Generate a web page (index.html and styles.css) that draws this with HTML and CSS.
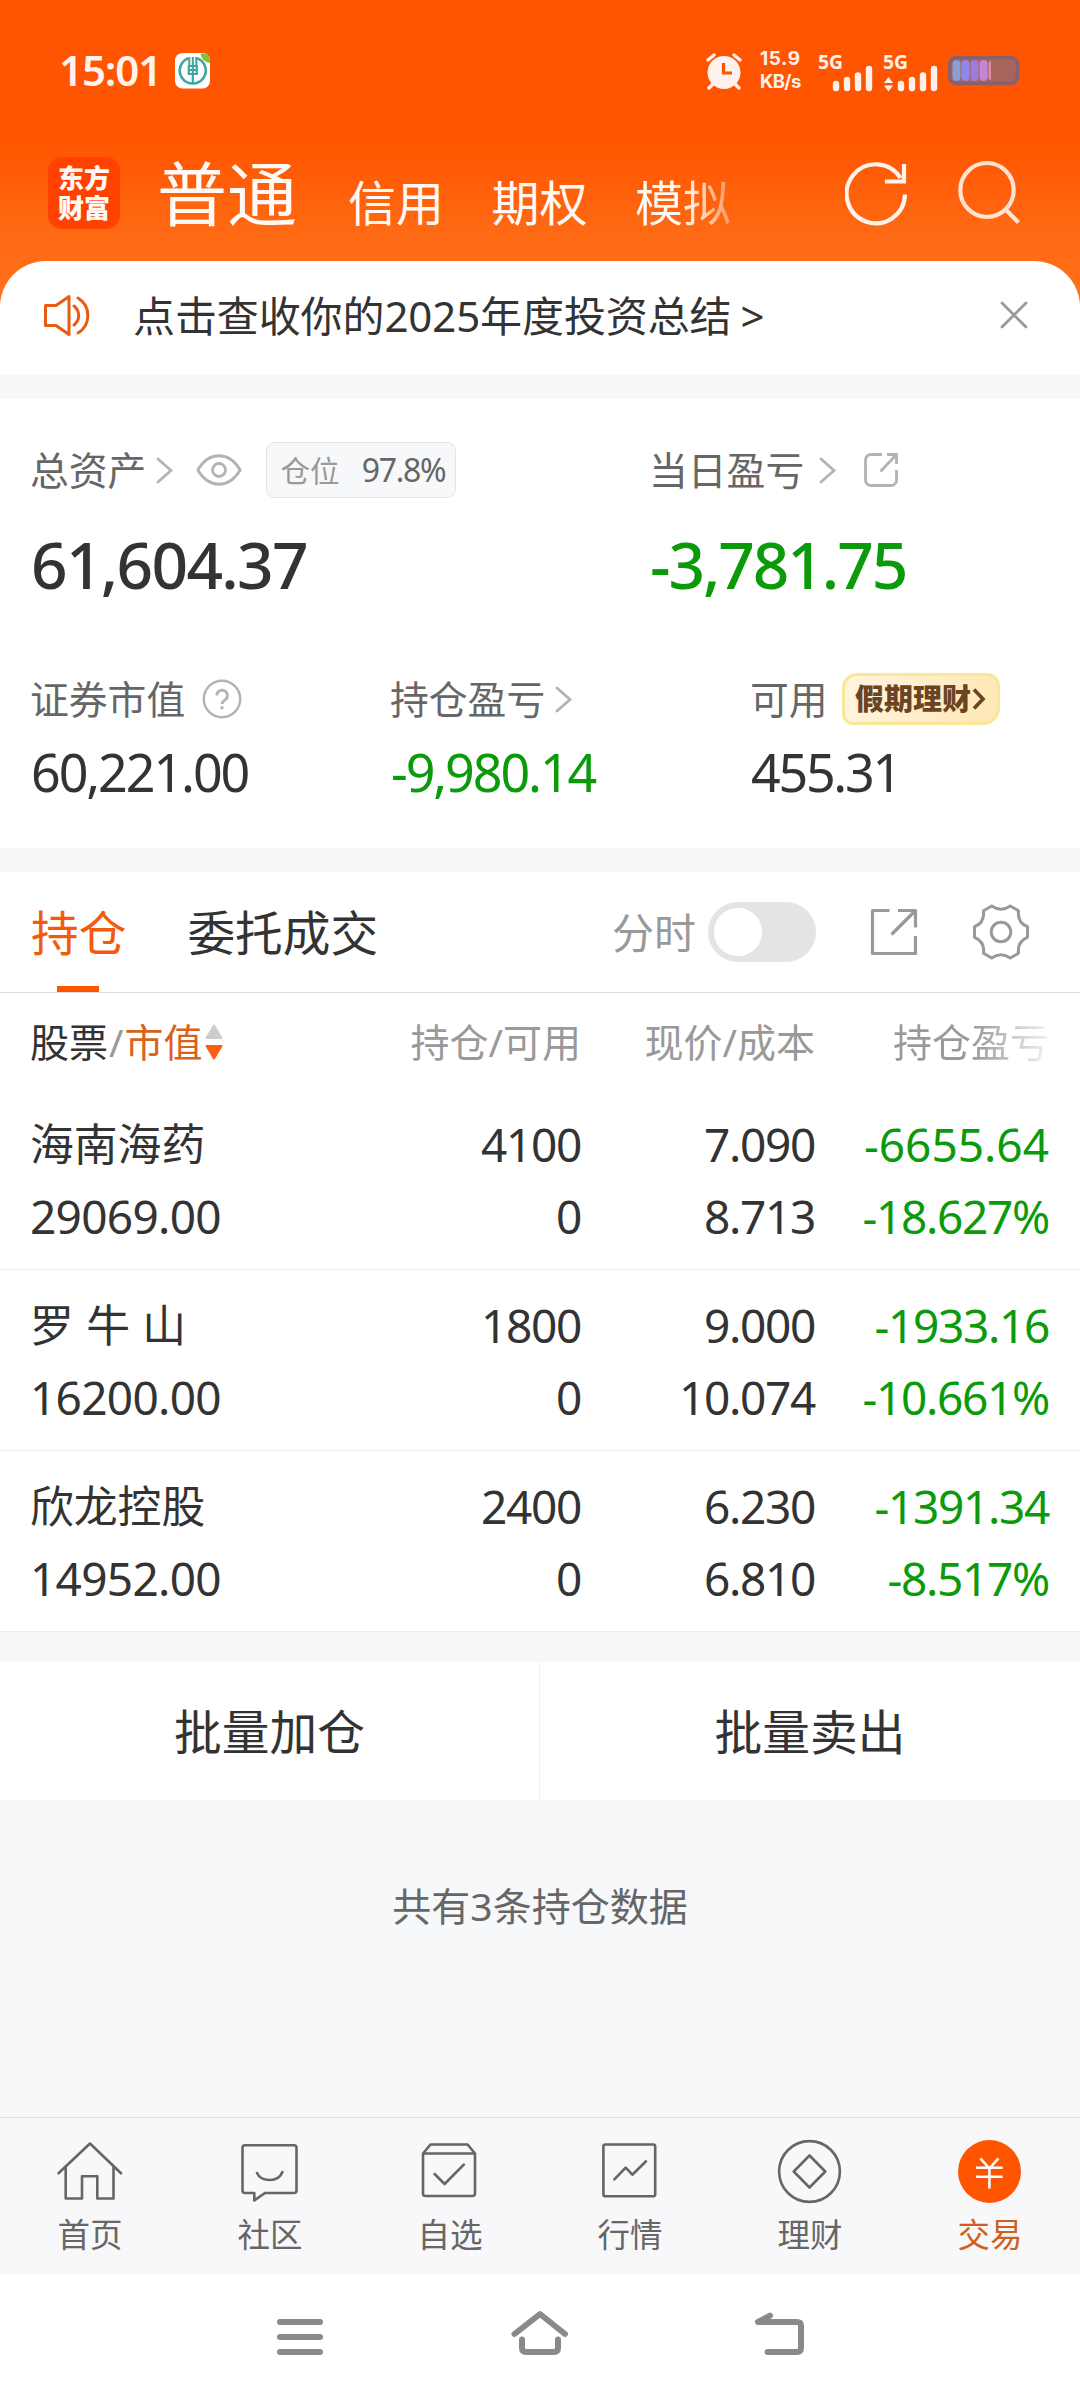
FILE: index.html
```html
<!DOCTYPE html>
<html lang="zh-CN">
<head>
<meta charset="utf-8">
<title>交易</title>
<link rel="stylesheet" href="styles.css">
</head>
<body>
<div class="screen">
  <header class="top">
    <div class="status">
      <span class="clock">15:01</span>
      <svg class="bank" width="36" height="36" viewBox="0 0 36 36">
        <rect width="35" height="35.5" rx="7.5" fill="#fff"/>
        <path d="M25.500 0.500H28a7 7 0 0 1 7 7v2.500a10 10 0 0 1-9.500-9.500z" fill="#7cc52c"/>
        <g fill="none" stroke="#3fa79f">
          <path d="M13.500 5.200A13 13 0 1 0 22 5.200" stroke-width="2.600"/>
          <path d="M14.300 4v9M17.800 4v9M21.300 4v9" stroke-width="2"/>
          <path d="M13.800 13h8v8h-8zM13 17h9.500M17.800 12v19" stroke-width="2.200"/>
        </g>
      </svg>
      <div class="status-right">
        <svg class="alarm" width="38" height="38" viewBox="0 0 38 38">
          <circle cx="19" cy="20.500" r="16.500" fill="#fff1eb"/>
          <path d="M3 8l6-5M35 8l-6-5M8 32l-4 4M30 32l4 4" stroke="#fff1eb" stroke-width="3.400" stroke-linecap="round"/>
          <path d="M18.500 11v10H27" fill="none" stroke="#ff5500" stroke-width="3.200"/>
        </svg>
        <div class="speed"><span class="rate">15.9</span><span>KB/s</span></div>
        <svg class="sig" width="56" height="40" viewBox="0 0 56 40">
          <text x="0" y="18" class="g5" textLength="25" lengthAdjust="spacingAndGlyphs">5G</text>
          <path d="M18 33v4M29 29v8M40 24.500v12.500M51 18v19" stroke="#fff1eb" stroke-width="6.400" stroke-linecap="round"/>
        </svg>
        <svg class="sig" width="56" height="40" viewBox="0 0 56 40">
          <text x="0" y="18" class="g5" textLength="25" lengthAdjust="spacingAndGlyphs">5G</text>
          <path d="M1 32l4.500-6 4.500 6zM1 34.500l4.500 6 4.500-6z" fill="#fff1eb"/>
          <path d="M18 33v4M29 29v8M40 24.500v12.500M51 18v19" stroke="#fff1eb" stroke-width="6.400" stroke-linecap="round"/>
        </svg>
        <svg class="battery" width="72" height="30" viewBox="0 0 72 30">
          <rect x="1.500" y="1.500" width="68" height="26" rx="7" fill="#a5655c" stroke="#89616c" stroke-width="3.500"/>
          <rect x="4.500" y="4" width="8" height="21" rx="4" fill="#8c9dd3"/>
          <rect x="13.500" y="4" width="8" height="21" rx="4" fill="#8f87ea"/>
          <rect x="22.500" y="4" width="8" height="21" rx="4" fill="#a07bdb"/>
          <rect x="31.500" y="4" width="8" height="21" rx="4" fill="#c485d2"/>
          <path d="M43 4.500a4 4 0 0 0-2.500 4v12a4 4 0 0 0 2.500 4z" fill="#d98bb0"/>
        </svg>
      </div>
    </div>
    <div class="titlebar">
      <div class="logo">东方<br>财富</div>
      <nav class="modes">
        <span class="mode-on">普通</span><span>信用</span><span>期权</span><span class="mode-fade">模拟</span>
      </nav>
      <svg class="refresh" width="66" height="66" viewBox="0 0 66 66" fill="none" stroke="#fff3ea" stroke-width="4.200">
        <path d="M60 34.500A29.200 29.500 0 1 1 55.500 18"/>
        <path d="M59 4v17.500H40"/>
      </svg>
      <svg class="search" width="66" height="66" viewBox="0 0 66 66" fill="none" stroke="#ffe3d2" stroke-width="4.200">
        <ellipse cx="31" cy="31" rx="26.700" ry="27"/>
        <path d="M49.500 50.500l13 13"/>
      </svg>
    </div>
  </header>

  <main>
    <section class="notice">
      <svg width="50" height="46" viewBox="0 0 50 46" fill="none" stroke="#ea5b12" stroke-width="3" stroke-linecap="round" stroke-linejoin="round">
        <path d="M3.500 12.500H14L27 3.500v38L14 32.500H3.500z"/>
        <path d="M32 13a12 12 0 0 1 0 19M36 5a20.500 20.500 0 0 1 0 35"/>
      </svg>
      <span class="notice-text">点击查收你的2025年度投资总结<i>&gt;</i></span>
      <svg class="close" width="30" height="30" viewBox="0 0 30 30" stroke="#999" stroke-width="2.800" stroke-linecap="round"><path d="M3 2l24 24M27 2L3 26"/></svg>
    </section>

    <section class="assets">
      <div class="asset-main">
        <div>
          <div class="label"><span class="label-text">总资产</span>
            <svg class="chev" width="18" height="28" viewBox="0 0 18 28"><path d="M2 3l13 11.500L2 26"/></svg>
            <svg class="eye" width="46" height="32" viewBox="0 0 46 32" fill="none" stroke="#b3b3b3" stroke-width="2.800"><path d="M1.800 16C13-3 33-3 44.200 16C33 35 13 35 1.800 16z" stroke-linejoin="round"/><circle cx="23" cy="16" r="6.500"/></svg>
            <span class="pill"><em>仓位</em><b>97.8%</b></span>
          </div>
          <div class="big">61,604.37</div>
        </div>
        <div>
          <div class="label"><span class="label-text">当日盈亏</span>
            <svg class="chev chev-wide" width="18" height="28" viewBox="0 0 18 28"><path d="M2 3l13 11.500L2 26"/></svg>
            <svg class="share" width="36" height="36" viewBox="0 0 36 36" fill="none" stroke="#b3b3b3" stroke-width="2.800"><path d="M19 2.500H8a5.500 5.500 0 0 0-5.500 5.500v20A5.500 5.500 0 0 0 8 33.500h20a5.500 5.500 0 0 0 5.500-5.500V18M24 2.500h9.500V12M33 3L17.500 19.500"/></svg>
          </div>
          <div class="big big-loss green">-3,781.75</div>
        </div>
      </div>
      <div class="asset-sub">
        <div>
          <div class="label"><span class="label-text">证券市值</span>
            <svg class="help" width="40" height="40" viewBox="0 0 40 40" fill="none" stroke="#b3b3b3"><circle cx="20" cy="20" r="18.200" stroke-width="2.400"/><path d="M14.800 16.500a5.300 5.300 0 1 1 8.300 4.300c-2 1.300-3 2-3 4.200" stroke-width="2.800"/><circle cx="20" cy="28.800" r="1" stroke-width="1.600"/></svg>
          </div>
          <div class="mid">60,221.00</div>
        </div>
        <div>
          <div class="label"><span class="label-text">持仓盈亏</span>
            <svg class="chev chev-near" width="18" height="28" viewBox="0 0 18 28"><path d="M2 3l13 11.500L2 26"/></svg>
          </div>
          <div class="mid green">-9,980.14</div>
        </div>
        <div>
          <div class="label"><span class="label-text">可用</span>
            <span class="gold">假期理财<svg width="14" height="24" viewBox="0 0 14 24" fill="none" stroke="#6b4423" stroke-width="3.600"><path d="M2 2.500l9 9.500-9 9.500"/></svg></span>
          </div>
          <div class="mid tight">455.31</div>
        </div>
      </div>
    </section>

    <section class="holdings">
      <div class="tabs">
        <span class="tab tab-on">持仓</span>
        <span class="tab">委托成交</span>
        <span class="switch-label">分时</span>
        <span class="switch"></span>
        <svg class="export" width="48" height="48" viewBox="0 0 48 48" fill="none" stroke="#999" stroke-width="3.200" stroke-linejoin="round"><path d="M19.500 2.500H2.500v43h43V28M28 2.500h17.500V19.500M45 3L21.500 26.500"/></svg>
        <svg class="gear" width="56" height="56" viewBox="0 0 56 56" fill="none" stroke="#999" stroke-width="3" stroke-linejoin="round">
          <path d="M18.700 2C24.500 6 31.500 6 37.300 2L45.500 6.700C44.700 14 47.500 20 54.500 22.700V33.300C47.500 36 44.700 42 45.500 49.300L37.300 54C31.500 50 24.500 50 18.700 54L10.500 49.300C11.300 42 8.500 36 1.500 33.300V22.700C8.500 20 11.300 14 10.500 6.700z"/>
          <circle cx="28" cy="28" r="9.800"/>
        </svg>
      </div>
      <div class="row head">
        <span class="stock-head">股票<i>/</i><em>市值</em><svg width="18" height="38" viewBox="0 0 18 38"><path d="M9 2.500l7.500 12.500h-15z" fill="#ccc" stroke="#ccc" stroke-width="2" stroke-linejoin="round"/><path d="M9 35.500l7.500-12.500h-15z" fill="#fa5f12" stroke="#fa5f12" stroke-width="2" stroke-linejoin="round"/></svg></span>
        <span>持仓/可用</span><span>现价/成本</span><span class="col-fade">持仓盈亏</span>
      </div>
      <div class="row stock">
        <div><span class="name">海南海药</span><span class="value">29069.00</span></div>
        <div><span>4100</span><span>0</span></div>
        <div><span>7.090</span><span>8.713</span></div>
        <div class="green"><span class="loss">-6655.64</span><span>-18.627%</span></div>
      </div>
      <div class="row stock">
        <div><span class="name name-spaced">罗 牛 山</span><span class="value">16200.00</span></div>
        <div><span>1800</span><span>0</span></div>
        <div><span>9.000</span><span>10.074</span></div>
        <div class="green"><span>-1933.16</span><span>-10.661%</span></div>
      </div>
      <div class="row stock">
        <div><span class="name">欣龙控股</span><span class="value">14952.00</span></div>
        <div><span>2400</span><span>0</span></div>
        <div><span>6.230</span><span>6.810</span></div>
        <div class="green"><span>-1391.34</span><span>-8.517%</span></div>
      </div>
    </section>

    <section class="batch"><span>批量加仓</span><span>批量卖出</span></section>
    <p class="count">共有3条持仓数据</p>
  </main>

  <nav class="tabbar">
    <a><svg viewBox="0 0 72 72"><path d="M4.500 38.300L36 8.500l31 29.800M11.700 32v31.500H28V41.300h15.300v22.200h16.200V32"/></svg>首页</a>
    <a><svg viewBox="0 0 72 72"><path d="M11 10.200h49a2.500 2.500 0 0 1 2.500 2.500v42.800a2.500 2.500 0 0 1-2.500 2.500H31l-10.700 7.500V58H11a2.500 2.500 0 0 1-2.500-2.500V12.700a2.500 2.500 0 0 1 2.500-2.500zM23 38c4 9.500 21.500 9.500 25.400-1"/></svg>社区</a>
    <a><svg viewBox="0 0 72 72"><path d="M9 18.500h52v40a2.500 2.500 0 0 1-2.500 2.500h-47A2.500 2.500 0 0 1 9 58.500zM9 18.500l7.500-9h37.100l7.400 9M20.600 39l10 10 19.200-19.300"/></svg>自选</a>
    <a><svg viewBox="0 0 72 72"><rect x="9.400" y="9.500" width="51.800" height="51.800" rx="2"/><path d="M20.400 44.300l11.300-11.600 6.600 7L52 26.300"/></svg>行情</a>
    <a><svg viewBox="0 0 72 72"><circle cx="35.500" cy="36.500" r="30.400"/><path d="M35.500 20.500l15.800 16-15.800 16-15.800-16z"/></svg>理财</a>
    <a class="nav-on"><svg viewBox="0 0 72 72"><circle cx="35.500" cy="36.500" r="31.500" fill="#ff5500" stroke="none"/><path d="M26.400 23.300l9 10.200 9-10.200M35.400 33.500v20M22 32.700h26.500M22 41.700h26.500" stroke="#fff" stroke-linecap="butt"/></svg>交易</a>
  </nav>

  <footer class="sysnav">
    <svg viewBox="0 0 60 60"><path d="M10 15h40M10 30h40M10 45h40"/></svg>
    <svg viewBox="0 0 60 60"><path d="M4.500 27L30 7l25 20M12 32.500V41q0 4 4 4h28q4 0 4-4v-8.500"/></svg>
    <svg viewBox="0 0 60 60"><path d="M20 8.700L8 15h39q4 0 4 4v22q0 4-4 4H17.600"/></svg>
  </footer>
</div>
</body>
</html>
```

FILE: styles.css
```css
* { box-sizing: border-box; }
body {
  margin: 0;
  background: #fff;
  color: #333;
  font-family: "Noto Sans", "Noto Sans CJK SC", sans-serif;
}
i, em { font-style: normal; }
svg { flex: none; display: block; }

.screen {
  width: 1080px;
  height: 2400px;
  display: flex;
  flex-direction: column;
  background: #f7f8fa;
  overflow: hidden;
}

/* orange header */
.top {
  height: 311px;
  margin-bottom: -50px;
  background: linear-gradient(#ff5500 0, #ff5500 142px, #ff6a14 235px, #ff7119 311px);
}
.status {
  height: 142px;
  display: flex;
  align-items: center;
  padding: 0 60px 0 59px;
}
.clock {
  width: 116px;
  padding-bottom: 4px;
  font-size: 42px;
  font-weight: 600;
  letter-spacing: -1.1px;
  color: #fff1eb;
}
.status-right { margin-left: auto; display: flex; align-items: center; }
.speed {
  width: 44px;
  margin: 0 14px 2px 17px;
  display: flex;
  flex-direction: column;
  font-family: Inter, sans-serif;
  font-size: 18.500px;
  line-height: 23px;
  font-weight: 700;
  letter-spacing: -0.6px;
  color: #fff1eb;
}
.rate { font-size: 19px; letter-spacing: 0.6px; }
.sig { margin-right: 9px; overflow: visible; }
.g5 { font-size: 19px; font-weight: 700; fill: #fff1eb; }
.titlebar {
  height: 119px;
  padding: 0 57px 0 48px;
  display: flex;
  align-items: flex-start;
  color: #fffaf5;
}
.logo {
  width: 72px;
  height: 72px;
  margin-top: 15px;
  padding-top: 6px;
  border-radius: 14px;
  background: #ff4200;
  text-align: center;
  font-weight: 900;
  font-size: 26px;
  line-height: 30px;
}
.modes {
  display: flex;
  align-items: baseline;
  margin-left: 37px;
  font-size: 48px;
  line-height: 104px;
}
.modes span { margin-right: 47.500px; }
.modes .mode-on { font-size: 70px; margin-right: 51px; }
.modes .mode-fade {
  margin-right: 0;
  color: transparent;
  background: linear-gradient(90deg, #fffaf5 50%, rgba(255, 250, 245, 0.35) 100%);
  background-clip: text;
  -webkit-background-clip: text;
}
.refresh { margin: 18px 0 0 auto; }
.search { margin: 17px 1px 0 45px; }

/* notice */
.notice {
  height: 114px;
  padding: 0 51px 4px 42px;
  border-radius: 46px 46px 0 0;
  background: #fff;
  display: flex;
  align-items: center;
}
.notice-text { margin-left: 41px; font-size: 42px; line-height: 60px; letter-spacing: -0.1px; }
.notice-text i { margin-left: 9px; }
.close { margin-left: auto; }

/* assets */
.assets {
  height: 449px;
  margin-top: 24px;
  padding-left: 31px;
  background: #fff;
}
.asset-main { display: grid; grid-template-columns: 619px 1fr; height: 258px; padding-top: 41px; }
.asset-sub { display: grid; grid-template-columns: repeat(3, 360px); padding-top: 12px; }
.label {
  height: 60px;
  display: flex;
  align-items: center;
  font-size: 38.800px;
  color: #666;
}
.label-text { padding-bottom: 5px; margin-left: -1px; margin-right: 1px; }
.chev { margin-left: 9px; fill: none; stroke: #b3b3b3; stroke-width: 2.8px; stroke-linecap: round; }
.chev-wide { margin-left: 14px; }
.chev-near { margin-left: 9px; }
.eye { margin-left: 22px; }
.pill {
  width: 190px;
  height: 56px;
  margin-left: 24px;
  padding: 0 10px 2px 13px;
  display: flex;
  align-items: center;
  justify-content: space-between;
  background: #f7f8fa;
  border: 1px solid #e4e4e6;
  border-radius: 9px;
}
.pill em { font-size: 29.500px; color: #999; }
.pill b { font-size: 32px; font-weight: 400; letter-spacing: -1.3px; }
.share { margin-left: 26px; }
.help { margin-left: 16px; }
.big {
  margin-top: 21px;
  font-size: 64px;
  line-height: 87px;
  font-weight: 500;
  letter-spacing: -1.7px;
}
.big-loss { letter-spacing: -2.1px; }
.mid { margin-top: 13px; font-size: 52px; line-height: 60px; letter-spacing: -2.1px; }
.tight { letter-spacing: -2.3px; }
.green { color: #0a9a0a; }
.gold {
  width: 158px;
  height: 52px;
  margin-left: 13px;
  display: flex;
  align-items: center;
  justify-content: center;
  gap: 1px;
  border: 3px solid #fbe695;
  border-radius: 15px 13px 17px 11px;
  background: linear-gradient(100deg, #fff4df, #ffe8b4);
  color: #6b4423;
  font-size: 29px;
  font-weight: 900;
  line-height: 44px;
}

/* holdings */
.holdings { margin-top: 24px; background: #fff; }
.tabs {
  height: 121px;
  padding: 0 51px 0 31px;
  display: flex;
  align-items: center;
  border-bottom: 1px solid #dfdfdf;
}
.tab { font-size: 47.700px; line-height: 122px; height: 120px; margin-right: 61px; }
.tab-on {
  color: #f45a0b;
  background: linear-gradient(#ff5500, #ff5500) 26px 114px / 42px 6px no-repeat;
}
.switch-label { margin-left: auto; padding-bottom: 3px; font-size: 42px; color: #999; }
.switch {
  width: 108px;
  height: 60px;
  margin-left: 12px;
  border-radius: 30px;
  background: radial-gradient(circle at 30px 30px, #fff 23.500px, #e4e4e6 24.500px);
}
.export { margin-left: 54px; }
.gear { margin-left: 55px; }
.row {
  display: grid;
  grid-template-columns: 1fr 200px 234px 234px;
  padding: 0 31px;
}
.row > * { text-align: right; }
.row > :first-child { text-align: left; }
.head { height: 96px; line-height: 98px; font-size: 39px; color: #999; }
.row .stock-head { display: flex; align-items: center; color: #333; height: 98px; margin-left: -1px; }
.stock-head i { color: #999; margin: 0 1px; }
.stock-head em { color: #d9611c; }
.stock-head svg { margin-left: 2px; }
.col-fade {
  color: transparent;
  background: linear-gradient(90deg, #999 calc(100% - 76px), rgba(153, 153, 153, 0.12) 100%);
  background-clip: text;
  -webkit-background-clip: text;
}
.stock {
  height: 181px;
  padding-top: 19px;
  font-size: 46px;
  line-height: 72px;
  letter-spacing: -1.3px;
  border-bottom: 1px solid #ececec;
}
.stock span { display: block; }
.stock .name { font-size: 43.800px; letter-spacing: 0; margin-left: -1px; }
.stock .name-spaced { word-spacing: 1px; }
.stock .value { margin-left: -1px; letter-spacing: -0.7px; }
.stock .loss { letter-spacing: 0; }

.batch {
  height: 138px;
  margin-top: 30px;
  display: grid;
  grid-template-columns: 1fr 1fr;
  background: #fff;
  font-size: 47.700px;
  line-height: 140px;
  text-align: center;
}
.batch span { height: 138px; }
.batch span:first-child { border-right: 1px solid #f2f2f3; }
.count { margin: 76px 0 0; font-size: 39px; line-height: 60px; text-align: center; color: #666; }

/* bottom bars */
.tabbar {
  height: 157px;
  margin-top: auto;
  border-top: 1px solid #e0e0e2;
  display: grid;
  grid-template-columns: repeat(6, 180px);
  background: #f8f8fa;
}
.tabbar a {
  display: flex;
  flex-direction: column;
  align-items: center;
  padding-top: 17px;
  font-size: 32.500px;
  line-height: 56px;
  color: #666;
}
.tabbar svg {
  width: 72px;
  height: 72px;
  fill: none;
  stroke: #666;
  stroke-width: 2.6px;
  stroke-linecap: round;
  stroke-linejoin: round;
}
.tabbar .nav-on { color: #d15e1b; }
.sysnav {
  height: 126px;
  padding-top: 33px;
  display: flex;
  justify-content: center;
  gap: 180px;
  background: #fff;
}
.sysnav svg {
  width: 60px;
  height: 60px;
  fill: none;
  stroke: #8a8a8a;
  stroke-width: 6px;
  stroke-linecap: round;
  stroke-linejoin: round;
}
```
